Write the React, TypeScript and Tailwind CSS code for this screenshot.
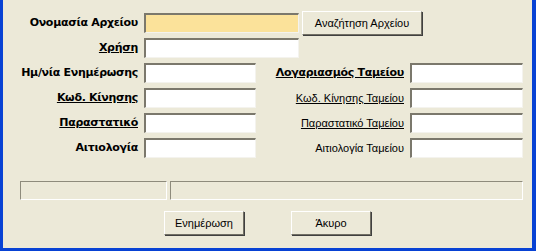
const base = "font-['Liberation_Sans','Arial',sans-serif]";
const bold = "font-['DejaVu_Sans','Verdana',sans-serif] font-bold tracking-[-0.3px]";

const sunken =
  "h-[20px] border-t-2 border-l-2 border-b border-r border-t-[#7b786c] border-l-[#7b786c] border-b-[#f4f3ee] border-r-[#f4f3ee]";

function Field({ width, yellow }: { width: string; yellow?: boolean }) {
  return <div className={`${sunken} ${width} ${yellow ? "bg-[#fbe29a]" : "bg-white"}`} />;
}

function XpButton({ label, width }: { label: string; width: string }) {
  return (
    <button
      className={`${width} h-[24px] border border-t-white border-l-white border-b-[#716f64] border-r-[#716f64] bg-[#ece9d8] text-[11px] text-black shadow-[1px_1px_0_#404040]`}
    >
      {label}
    </button>
  );
}

type Row = {
  left: string;
  leftStyle: string;
  right?: string;
  rightStyle?: string;
};

const rows: Row[] = [
  { left: "Ημ/νία Ενημέρωσης", leftStyle: bold, right: "Λογαριασμός Ταμείου", rightStyle: `${bold} underline` },
  { left: "Κωδ. Κίνησης", leftStyle: `${bold} underline`, right: "Κωδ. Κίνησης Ταμείου", rightStyle: "underline" },
  { left: "Παραστατικό", leftStyle: `${bold} underline`, right: "Παραστατικό Ταμείου", rightStyle: "underline" },
  { left: "Αιτιολογία", leftStyle: bold, right: "Αιτιολογία Ταμείου", rightStyle: "" },
];

export default function App() {
  return (
    <div
      className={`${base} h-[251px] w-[536px] border-b-[3px] border-l-[3px] border-r-[4px] border-[#0842d4] bg-[#ece9d8] text-[11px] text-black`}
    >
      <div className="flex flex-col pt-[11px]">
        <div className="flex h-[24px] items-center">
          <span className={`w-[135px] text-right ${bold}`}>Ονομασία Αρχείου</span>
          <div className="ml-[6px]">
            <Field width="w-[155px]" yellow />
          </div>
          <div className="ml-[3px]">
            <XpButton label="Αναζήτηση Αρχείου" width="w-[120px]" />
          </div>
        </div>
        <div className="mt-[3px] flex h-[20px] items-center">
          <span className={`w-[135px] text-right underline ${bold}`}>Χρήση</span>
          <div className="ml-[6px]">
            <Field width="w-[155px]" />
          </div>
        </div>
        <div className="mt-[5px] flex flex-col gap-[5px]">
          {rows.map((r) => (
            <div key={r.left} className="flex h-[20px] items-center">
              <span className={`w-[135px] text-right ${r.leftStyle}`}>{r.left}</span>
              <div className="ml-[6px]">
                <Field width="w-[112px]" />
              </div>
              <span className={`w-[148px] text-right ${r.rightStyle}`}>{r.right}</span>
              <div className="ml-[6px]">
                <Field width="w-[113px]" />
              </div>
            </div>
          ))}
        </div>
        <div className="mt-[23px] flex gap-[3px] pl-[17px]">
          <div className="h-[19px] w-[147px] border border-t-[#8e8b7c] border-l-[#8e8b7c] border-b-white border-r-white" />
          <div className="h-[19px] w-[353px] border border-t-[#8e8b7c] border-l-[#8e8b7c] border-b-white border-r-white" />
        </div>
        <div className="mt-[11px] flex pl-[161px]">
          <XpButton label="Ενημέρωση" width="w-[80px]" />
          <div className="ml-[47px]">
            <XpButton label="Άκυρο" width="w-[80px]" />
          </div>
        </div>
      </div>
    </div>
  );
}
